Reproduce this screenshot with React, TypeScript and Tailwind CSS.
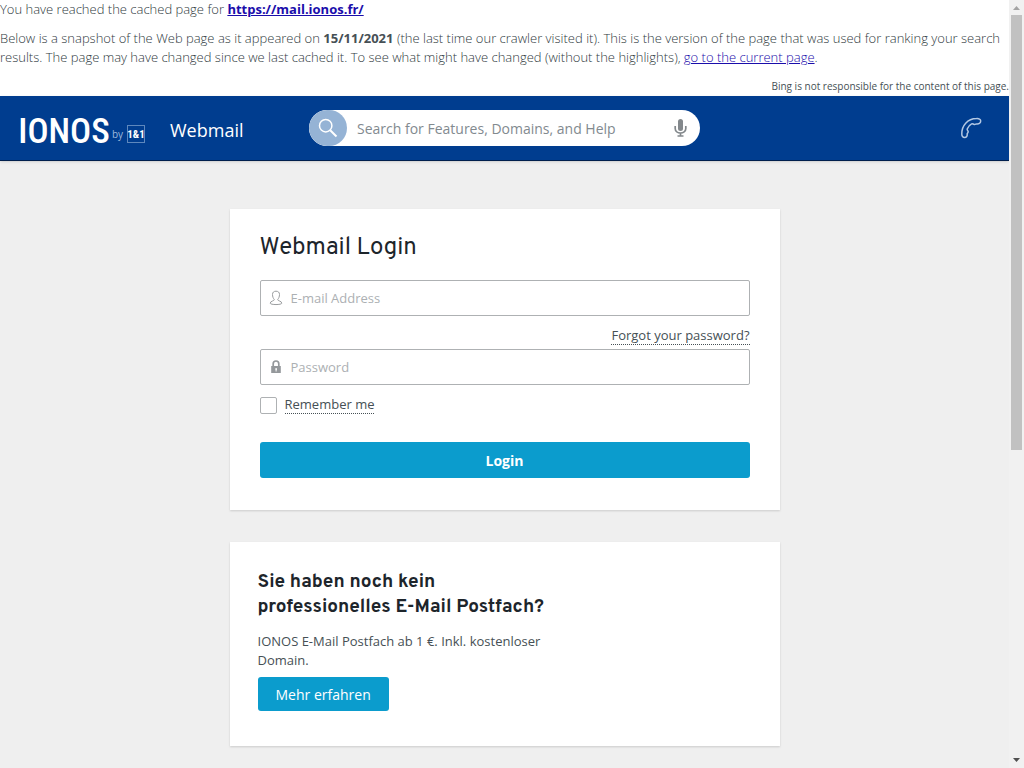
import React from "react";

function CacheNotice() {
  return (
    <div className="flex flex-col gap-[10px] bg-white text-[13px] leading-[19px] font-[320] text-[#2f3a40]">
      <p>
        You have reached the cached page for{" "}
        <a href="https://mail.ionos.fr/" className="font-bold text-[#1a0dab] underline">
          https://mail.ionos.fr/
        </a>
      </p>
      <p>
        Below is a snapshot of the Web page as it appeared on{" "}
        <strong className="font-bold text-[#465055]">15/11/2021</strong> (the last time our crawler
        visited it). This is the version of the page that was used for ranking your search results.
        The page may have changed since we last cached it. To see what might have changed (without
        the highlights),{" "}
        <a href="https://mail.ionos.fr/" className="text-[#1a0dab] underline">
          go to the current page
        </a>
        .
      </p>
      <p className="text-right text-[10px] font-normal text-[#465055]">
        Bing is not responsible for the content of this page.
      </p>
    </div>
  );
}

function Logo() {
  return (
    <a href="#home" aria-label="IONOS by 1&1" className="block">
      <svg width="127" height="52" viewBox="0 -10 127 52" aria-hidden="true">
        <text x="44" y="31" fill="#fff" fontWeight="500" fontSize="35" textAnchor="middle" fontFamily="'Roboto Condensed', Roboto, sans-serif">IONOS</text>
        <text x="92" y="26" fill="#9db9dd" fontSize="10" fontWeight="400" fontFamily="'Open Sans', sans-serif">by</text>
        <rect x="107.500" y="13.500" width="17" height="17" fill="none" stroke="#5e88bd" />
        <text x="116" y="26" fill="#fff" fontSize="11" fontWeight="700" textAnchor="middle" fontFamily="'Roboto Condensed', Roboto, sans-serif">1&amp;1</text>
      </svg>
    </a>
  );
}

function Header() {
  return (
    <header className="grid h-[65px] grid-cols-[1fr_391px_1fr] items-center border-b border-[#001f4d] bg-[#003d8f] shadow-sm">
      <div className="flex items-center gap-[23px] pl-5">
        <Logo />
        <span className="pt-1 text-[18px] leading-6 text-white">Webmail</span>
      </div>
      <form className="flex h-9 items-center overflow-hidden rounded-full bg-white" onSubmit={(e) => e.preventDefault()}>
        <button type="submit" aria-label="Search" className="flex h-9 w-[38px] shrink-0 items-center justify-center rounded-full bg-[#95b3d5]">
          <svg width="20" height="20" viewBox="0 0 20 20" fill="none" stroke="#fff" strokeWidth="1.500" aria-hidden="true">
            <circle cx="7.700" cy="7.700" r="6.200" />
            <path d="M12.200 12.200L18.500 18.500" strokeWidth="2" />
          </svg>
        </button>
        <input
          type="text"
          aria-label="Search for Features, Domains, and Help"
          placeholder="Search for Features, Domains, and Help"
          className="min-w-0 flex-1 px-[10px] text-[14px] text-[#465055] outline-none placeholder:text-[#828a8f]"
        />
        <button type="button" aria-label="Voice search" className="mr-[13px] shrink-0">
          <svg width="13" height="20" viewBox="0 0 13 20" aria-hidden="true">
            <rect x="4" y="1" width="5" height="12" rx="2.500" fill="#83888c" />
            <path d="M1.200 8v2.500c0 6 10.600 6 10.600 0V8M6.500 15v3M3.500 18h6" fill="none" stroke="#83888c" strokeWidth="1.700" />
          </svg>
        </button>
      </form>
      <a href="#contact" aria-label="Contact" className="mr-[27px] justify-self-end">
        <svg width="22" height="22" viewBox="0 0 22 22" fill="none" stroke="#b3c8e3" strokeWidth="1.500" strokeLinejoin="round" aria-hidden="true">
          <path d="M1.800 17C1.600 8.500 7.500 1.800 16.500 1.600C19 1.400 20.700 2.300 20.700 4C20.700 6.200 18.600 7.100 16.800 6.900C15.700 6.800 15.600 7.700 14.300 7.500C12.900 7.200 12.800 6.300 11.600 6.900C9.600 7.900 8 9.800 7.200 12C6.800 13.200 8.200 13.500 8.200 14.700C8.200 15.900 7.100 15.900 7.200 17C7.400 19.100 6.500 20.500 4.600 20.500C2.800 20.500 1.800 19.200 1.800 17Z" />
        </svg>
      </a>
    </header>
  );
}

const fieldBox = "flex h-9 items-center gap-2 rounded-[2px] border border-[#aeb1b3] px-2";
const fieldInput = "h-full min-w-0 flex-1 bg-transparent text-[13px] outline-none placeholder:text-[#acb0b3]";
const cardShadow = "bg-white shadow-[0_1px_2px_rgba(0,0,0,0.15)]";

function LoginCard() {
  return (
    <section className={`${cardShadow} px-[30px] pt-[26px] pb-8`}>
      <h1 className="font-[Overpass,Roboto,sans-serif] text-[24px] leading-[27px] text-[#1d252b]">Webmail Login</h1>
      <form onSubmit={(e) => e.preventDefault()}>
        <div className={`${fieldBox} mt-[18px]`}>
          <svg width="14" height="16" viewBox="0 0 14 16" fill="none" stroke="#9a9d9f" aria-hidden="true">
            <path d="M5.300 9.300C4.200 8.500 3.500 6.500 3.500 4.500C3.500 2.300 4.800 1.200 7 1.200S10.500 2.300 10.500 4.500C10.500 6.500 9.800 8.500 8.700 9.300C8.500 11.300 12.800 10.800 12.800 13.200C12.800 15 1.200 15 1.200 13.200C1.200 10.800 5.500 11.300 5.300 9.300Z" />
          </svg>
          <input type="email" aria-label="E-mail Address" placeholder="E-mail Address" className={fieldInput} />
        </div>
        <div className="flex h-[33px] items-end justify-end pb-1">
          <a href="#forgot" className="border-b border-dotted border-[#465055] text-[13px] leading-[18px] text-[#465055]">
            Forgot your password?
          </a>
        </div>
        <div className={fieldBox}>
          <svg width="14" height="16" viewBox="0 0 14 16" aria-hidden="true">
            <path d="M4.200 8V4.800a2.800 2.800 0 0 1 5.600 0V8" fill="none" stroke="#94989b" strokeWidth="1.700" />
            <path fill="#94989b" fillRule="evenodd" d="M2.200 7h9.600v7h-9.600zM6.300 9.200v1.300l.3.400v1.600h1v-1.600l.4-.4v-1.300z" />
          </svg>
          <input type="password" aria-label="Password" placeholder="Password" className={fieldInput} />
        </div>
        <div className="mt-[11px] flex items-center gap-2">
          <input
            id="remember"
            type="checkbox"
            className="size-[17px] appearance-none rounded-[2px] border border-[#aeb1b3] checked:bg-[#0b9ccd]"
          />
          <label htmlFor="remember" className="border-b border-dotted border-[#465055] text-[13px] leading-[17px] text-[#465055]">
            Remember me
          </label>
        </div>
        <button type="submit" className="mt-7 block h-9 w-full rounded-[3px] bg-[#0b9ccd] text-[14px] font-bold text-white">
          Login
        </button>
      </form>
    </section>
  );
}

function PromoCard() {
  return (
    <section className={`${cardShadow} px-7 pt-7 pb-[35px]`}>
      <h2 className="font-[Overpass,Roboto,sans-serif] text-[19px] leading-[25px] font-bold text-[#1d252b]">
        Sie haben noch kein
        <br />
        professionelles E-Mail Postfach?
      </h2>
      <p className="mt-3 max-w-[290px] text-[13px] leading-[19px] text-[#465055]">
        IONOS E-Mail Postfach ab 1 €. Inkl. kostenloser Domain.
      </p>
      <a href="#more" className="mt-[7px] inline-flex h-[34px] items-center rounded-[3px] bg-[#0b9ccd] px-[18px] text-[14px] text-white">
        Mehr erfahren
      </a>
    </section>
  );
}

function ScrollRail() {
  return (
    <div aria-hidden="true" className="sticky top-0 flex h-screen w-[15px] shrink-0 flex-col items-center bg-[#f1f1f1]">
      <svg width="15" height="15" viewBox="0 0 15 15">
        <path d="M7.500 6L11 10H4Z" fill="#a3a3a3" />
      </svg>
      <div className="w-[11px] grow-[435] bg-[#c1c1c1]" />
      <div className="grow-[303]" />
      <svg width="15" height="15" viewBox="0 0 15 15">
        <path d="M4 5H11L7.500 9Z" fill="#505050" />
      </svg>
    </div>
  );
}

export default function App() {
  return (
    <div className="flex min-h-screen items-start bg-[#efefef] font-['Open_Sans',sans-serif]">
      <div className="min-w-0 flex-1">
        <CacheNotice />
        <Header />
        <main className="mx-auto flex max-w-[550px] flex-col gap-8 pt-12 pb-5">
          <LoginCard />
          <PromoCard />
        </main>
      </div>
      <ScrollRail />
    </div>
  );
}
